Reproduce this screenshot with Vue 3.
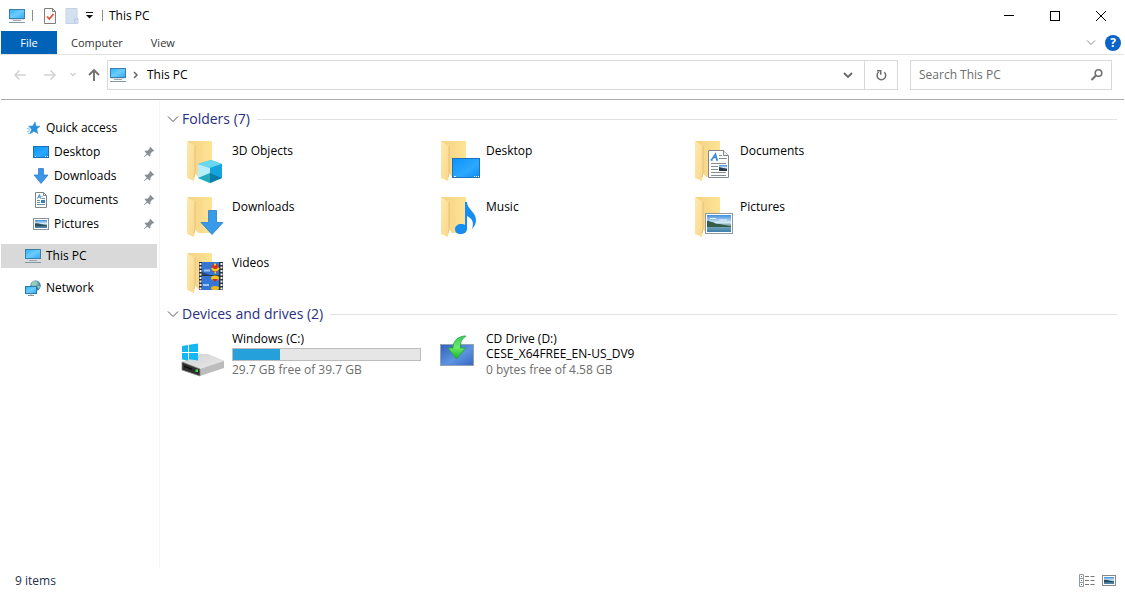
<template>
  <svg class="sprite" width="0" height="0" aria-hidden="true">
    <defs>
      <linearGradient id="g-screen" x1="0" y1="0" x2="1" y2="1">
        <stop offset="0" stop-color="#2fb0fa" />
        <stop offset="0.5" stop-color="#6cccff" />
        <stop offset="1" stop-color="#2fa8f5" />
      </linearGradient>
      <linearGradient id="g-desktop" x1="0" y1="0" x2="1" y2="1">
        <stop offset="0" stop-color="#0a94fb" />
        <stop offset="0.6" stop-color="#2ca8ff" />
        <stop offset="1" stop-color="#0d8df5" />
      </linearGradient>
      <linearGradient id="g-folder" x1="0" y1="0" x2="1" y2="0">
        <stop offset="0" stop-color="#f3d084" />
        <stop offset="1" stop-color="#ffe494" />
      </linearGradient>
      <linearGradient id="g-flap" x1="0" y1="0" x2="1" y2="1">
        <stop offset="0" stop-color="#ffe9ad" />
        <stop offset="1" stop-color="#f8d88c" />
      </linearGradient>
      <linearGradient id="g-photo" x1="0" y1="0" x2="0" y2="1">
        <stop offset="0" stop-color="#3f8ddd" />
        <stop offset="0.45" stop-color="#d6ebf7" />
        <stop offset="0.55" stop-color="#8fb5b8" />
        <stop offset="1" stop-color="#3c7fae" />
      </linearGradient>
      <linearGradient id="g-cd" x1="0" y1="0" x2="1" y2="1">
        <stop offset="0" stop-color="#315fb8" />
        <stop offset="0.55" stop-color="#5d93e0" />
        <stop offset="1" stop-color="#3767c0" />
      </linearGradient>
      <linearGradient id="g-green" x1="0" y1="0" x2="0" y2="1">
        <stop offset="0" stop-color="#3fca62" />
        <stop offset="0.5" stop-color="#6bea66" />
        <stop offset="1" stop-color="#12b325" />
      </linearGradient>
      <linearGradient id="g-drive" x1="0" y1="0" x2="1" y2="1">
        <stop offset="0" stop-color="#d2d2d2" />
        <stop offset="1" stop-color="#e9e9e9" />
      </linearGradient>
      <radialGradient id="g-globe" cx="0.4" cy="0.3" r="0.8">
        <stop offset="0" stop-color="#b8dfe4" />
        <stop offset="0.5" stop-color="#5a9fae" />
        <stop offset="1" stop-color="#23638c" />
      </radialGradient>
    </defs>

    <symbol id="i-pc" viewBox="0 0 16 16">
      <rect x="0.5" y="1.5" width="15" height="9" fill="url(#g-screen)" stroke="#3d7fa8" />
      <path d="M1 11.5h14" stroke="#d5dde2" />
      <path d="M4 12.5h8" stroke="#9aa8b0" />
      <path d="M0 14.5h16" stroke="#8299a8" />
    </symbol>
    <symbol id="i-props" viewBox="0 0 16 16">
      <path d="M2.5 0.5h8l3 3v12h-11z" fill="#fafafa" stroke="#7d7d7d" />
      <path d="M10.5 0.5v3h3" fill="none" stroke="#7d7d7d" />
      <path d="M5 8.5l2.3 2.5 4.2-5" fill="none" stroke="#e0502e" stroke-width="1.7" />
    </symbol>
    <symbol id="i-newfolder" viewBox="0 0 16 16">
      <path d="M2 0.5h11v10h1v5h-12z" fill="#d3e0f0" stroke="#c3d3e6" />
      <path d="M10.5 15v-4h3.5" fill="none" stroke="#b4c8df" />
    </symbol>
    <symbol id="i-star" viewBox="0 0 16 16">
      <path d="M10 2l1 4.2 4 .1-3.3 2.7 1.1 4.5-3.7-2.3-4 2.5 1.5-4.5-3-3 4.2-.1z" fill="#2a8edb" stroke="#2a8edb" stroke-width="0.6" />
      <path d="M2 8.5l3 .7M2 11.5l3-.7M3 13.8l2-.8" stroke="#7cc0f0" />
    </symbol>
    <symbol id="i-desktop" viewBox="0 0 16 16">
      <rect x="0.5" y="2.5" width="15" height="11" fill="url(#g-desktop)" stroke="#1b6fb9" />
      <path d="M2 12.5h1M12 12.5h1M14 12.5h1" stroke="#fff" />
    </symbol>
    <symbol id="i-download" viewBox="0 0 16 16">
      <path d="M5.5 0.5h5v6.5h4.5l-7 8.5-7-8.5h4.5z" fill="#3a96e8" stroke="#2777c2" stroke-width="0.7" />
    </symbol>
    <symbol id="i-document" viewBox="0 0 16 16">
      <path d="M2.5 0.5h8l3 3v12h-11z" fill="#fff" stroke="#7e868c" />
      <path d="M10.5 0.5v3h3" fill="none" stroke="#7e868c" />
      <path d="M4.5 6.5l2-4 1 4M5 5h2.5" fill="none" stroke="#3b8ad0" />
      <path d="M8.5 4.5h1M8.5 6.5h3.5M4 8.5h3M4 10.5h3M4 12.5h8" stroke="#6c8eb0" />
      <rect x="8" y="8" width="4" height="3" fill="#3b7cba" />
    </symbol>
    <symbol id="i-picture" viewBox="0 0 16 16">
      <rect x="0.5" y="2.5" width="15" height="11" fill="#fff" stroke="#8c9298" />
      <rect x="2" y="4" width="12" height="8" fill="url(#g-photo)" />
      <path d="M2 7.5c3-1 6 1 12 2v1h-12z" fill="#29505f" />
    </symbol>
    <symbol id="i-network" viewBox="0 0 16 16">
      <circle cx="10.5" cy="5.5" r="5.2" fill="url(#g-globe)" />
      <path d="M7 3c2-2 4-1 5 0l-2 2-3 1zM12 6l3 0-1 3z" fill="#9bcdaf" />
      <rect x="0.5" y="6.5" width="11" height="7" fill="url(#g-screen)" stroke="#2779ad" />
      <path d="M3 15.5h6M6 13v2" stroke="#7695a8" />
    </symbol>
    <symbol id="i-pin" viewBox="0 0 12 12">
      <path d="M7.200 0.8l4 4-1 .8-.8-.1-2 2.2.1 1.9-1 .9-2-2.100-3.300 2.900-.4-.4 2.900-3.300-2.100-2 .9-1 1.900.1 2.200-2-.1-.8z" fill="#8a8f94" />
    </symbol>

    <symbol id="i-folder" viewBox="0 0 48 48">
      <path d="M7 5h25v36h-18z" fill="url(#g-folder)" />
      <path d="M7 5l8 5v27l-1 8-7-3z" fill="url(#g-flap)" />
      <path d="M15 10v27l-1 4" fill="none" stroke="#e3bd6c" stroke-width="0.8" />
      <path d="M15 37.5l3 3-1 2.5-2 .5z" fill="#fff" />
    </symbol>
    <symbol id="i-objects-large" viewBox="0 0 48 48">
      <use href="#i-folder" />
      <path d="M31 24l11 4v14l-12 5-12-5v-14z" fill="#22b2d8" />
      <path d="M18 28l13-4 11 4-12 4z" fill="#6bd7ef" />
      <path d="M18 28l12 4v15l-12-5z" fill="#b5eef7" />
      <path d="M18 42l12-5v10z" fill="#25a9bd" />
      <path d="M30 32l12-4v14l-12-5z" fill="#14a3df" />
      <path d="M30 37l12 5-12 5z" fill="#087da8" />
    </symbol>
    <symbol id="i-desktop-large" viewBox="0 0 48 48">
      <use href="#i-folder" />
      <rect x="18.5" y="22.5" width="27" height="19" fill="url(#g-desktop)" stroke="#2071b8" />
      <path d="M20 40.5h2M40 40.5h1M42 40.5h1M44 40.5h1" stroke="#fff" />
    </symbol>
    <symbol id="i-documents-large" viewBox="0 0 48 48">
      <use href="#i-folder" />
      <path d="M20.5 14.5h15l5 5v22h-20z" fill="#fff" stroke="#7e8790" />
      <path d="M35.5 14.5v5h5" fill="#eee" stroke="#7e8790" />
      <path d="M22.5 24h2M23.5 24l4-6 1.500 6M25 21.500h4M28 24h2" fill="none" stroke="#348ad6" stroke-width="1.500" />
      <path d="M31 19.5h3M31 22.5h8M23 27.5h15M23 30.5h7M23 33.5h7M23 36.5h15M23 39.5h15" stroke="#858d96" />
      <rect x="31" y="29" width="8" height="6" fill="url(#g-photo)" />
      <path d="M31 31l8 2v2h-8z" fill="#253d4a" />
    </symbol>
    <symbol id="i-downloads-large" viewBox="0 0 48 48">
      <use href="#i-folder" />
      <path d="M28.5 18.5h8v12h6.5l-11 12-11-12h7.5z" fill="#389be9" stroke="#2a7fca" stroke-width="0.8" />
    </symbol>
    <symbol id="i-music-large" viewBox="0 0 48 48">
      <use href="#i-folder" />
      <path d="M31 10h2c0 7 9 10 9 18 0 4-2 7-4 9 2-6 1-10-5-13v13c0 3-3 5-6.5 5s-5.500-2-5.500-5 3-5 6-5c2 0 3 .4 4 1z" fill="#168df0" />
    </symbol>
    <symbol id="i-pictures-large" viewBox="0 0 48 48">
      <use href="#i-folder" />
      <rect x="17.5" y="21.5" width="27" height="20" fill="#fff" stroke="#92999e" />
      <rect x="19" y="23" width="24" height="17" fill="url(#g-photo)" />
      <path d="M19 29c2-1 3 1 5 1s3 2 6 2 6 1 13 2v1h-24z" fill="#355e4a" />
      <path d="M22 26.5h6M31 28h8" stroke="#e7f3fb" />
    </symbol>
    <symbol id="i-videos-large" viewBox="0 0 48 48">
      <use href="#i-folder" />
      <rect x="19" y="14" width="24" height="28" fill="#2d3338" />
      <rect x="22" y="14" width="17" height="13" fill="#3575d5" />
      <rect x="22" y="28" width="17" height="14" fill="#3575d5" />
      <path d="M20.5 15v27M41.5 15v27" stroke="#f2f2f2" stroke-width="2" stroke-dasharray="2 1.5" />
      <path d="M24 22.5h6M23 37h6" stroke="#9fc5f2" stroke-width="2" />
      <ellipse cx="35" cy="20" rx="3.5" ry="4" fill="#d63224" />
      <path d="M32 20c1 3 5 3 7 0" fill="none" stroke="#f6d21d" stroke-width="2" />
      <path d="M34 16.5h2M34.5 24.5h1.5" stroke="#f6d21d" stroke-width="2" />
      <ellipse cx="35" cy="30" rx="4" ry="2.5" fill="#f1c51b" />
      <path d="M32 31l3 3 3-3" fill="#c62a20" />
      <ellipse cx="35" cy="40" rx="4" ry="2" fill="#eaba17" />
      <path d="M22 24l8 3h-8z" fill="#24467d" />
    </symbol>

    <symbol id="i-drive-large" viewBox="0 0 48 48">
      <path d="M2 31l19-8h6l17 7v7l-24 8-18-6z" fill="#bcbcbc" />
      <path d="M2 31l19-8h6l17 7-24 8z" fill="url(#g-drive)" />
      <path d="M2 31l18 7v7l-18-6z" fill="#2e2e2e" stroke="#8a8a8a" stroke-width="0.8" />
      <path d="M4 34.5l8 3v1.5l-8-3z" fill="#0c0c0c" />
      <rect x="15.5" y="38.5" width="2.5" height="2.5" fill="#2ee33f" />
      <path d="M2 15l6-1v7h-6zM9 13.8l9-1.3v8.5h-9zM2 22h6v7.5l-6-1zM9 22h9v7.5l-9-1.2z" fill="#13b7f4" />
    </symbol>
    <symbol id="i-cd-large" viewBox="0 0 48 48">
      <rect x="6.5" y="13.5" width="33" height="21" fill="url(#g-cd)" stroke="#93a3b5" />
      <path d="M32 5c-7 0-13 4-13 12h-5l8.500 11 9-11h-5c-.5-5 1-9 5.500-12z" fill="url(#g-green)" stroke="#21a33b" stroke-width="0.8" />
    </symbol>
  </svg>

  <div class="explorer">
    <header class="titlebar">
      <svg class="icon"><use href="#i-pc" /></svg>
      <span class="divider"></span>
      <button class="quick" aria-label="Properties"><svg class="icon"><use href="#i-props" /></svg></button>
      <button class="quick" aria-label="New folder"><svg class="icon"><use href="#i-newfolder" /></svg></button>
      <button class="customize" aria-label="Customize Quick Access Toolbar">
        <svg width="9" height="7" viewBox="0 0 9 7"><path d="M1 0.5h7" stroke="#111" /><path d="M1 3h7l-3.5 3.5z" fill="#111" /></svg>
      </button>
      <span class="divider"></span>
      <h1 class="title">This PC</h1>
      <div class="window-controls">
        <button aria-label="Minimize">
          <svg width="10" height="10" viewBox="0 0 10 10"><path d="M0 4.5h10" stroke="#000" /></svg>
        </button>
        <button aria-label="Maximize">
          <svg width="10" height="10" viewBox="0 0 10 10"><rect x="0.5" y="0.5" width="9" height="9" fill="none" stroke="#000" /></svg>
        </button>
        <button aria-label="Close">
          <svg width="10" height="10" viewBox="0 0 10 10"><path d="M0 0l10 10M10 0L0 10" stroke="#000" /></svg>
        </button>
      </div>
    </header>

    <nav class="ribbon">
      <button v-for="tab in tabs" :key="tab" class="tab" :class="{ 'tab--file': tab === 'File' }">{{ tab }}</button>
      <button class="expand" aria-label="Expand the Ribbon">
        <svg width="10" height="6" viewBox="0 0 10 6"><path d="M1 0.5l4 4 4-4" fill="none" stroke="#8a8a8a" /></svg>
      </button>
      <button class="help" aria-label="Help">?</button>
    </nav>

    <div class="toolbar">
      <button class="nav nav--wide" aria-label="Back" disabled>
        <svg width="14" height="12" viewBox="0 0 14 12"><path d="M13 6H2M6.5 1.5L2 6l4.5 4.5" fill="none" stroke="#d2d2d2" stroke-width="1.5" /></svg>
      </button>
      <button class="nav nav--wide" aria-label="Forward" disabled>
        <svg width="14" height="12" viewBox="0 0 14 12"><path d="M1 6h11M7.5 1.5L12 6l-4.5 4.5" fill="none" stroke="#d2d2d2" stroke-width="1.5" /></svg>
      </button>
      <button class="nav nav--slim" aria-label="Recent locations">
        <svg width="8" height="6" viewBox="0 0 8 6"><path d="M1.5 1L4 3.5 6.5 1" fill="none" stroke="#cfcfcf" stroke-width="1.3" /></svg>
      </button>
      <button class="nav" aria-label="Up">
        <svg width="14" height="14" viewBox="0 0 14 14"><path d="M7 13V2M2 7l5-5 5 5" fill="none" stroke="#707070" stroke-width="1.9" /></svg>
      </button>
      <div class="address">
        <svg class="icon"><use href="#i-pc" /></svg>
        <svg class="crumb-arrow" width="6" height="8" viewBox="0 0 6 8"><path d="M1 1l3 3-3 3" fill="none" stroke="#666" stroke-width="1.5" /></svg>
        <button class="crumb">This PC</button>
        <button class="history" aria-label="Previous locations">
          <svg width="10" height="7" viewBox="0 0 10 7"><path d="M1 1l4 4 4-4" fill="none" stroke="#666" stroke-width="1.8" /></svg>
        </button>
        <button class="refresh" aria-label="Refresh">
          <svg width="12" height="12" viewBox="0 0 12 12">
            <path d="M9.400 3.3A4.300 4.300 0 1 1 3.700 3" fill="none" stroke="#6c6c6c" stroke-width="1.5" />
            <path d="M2 1.7h3.700v4" fill="none" stroke="#6c6c6c" stroke-width="1.5" />
          </svg>
        </button>
      </div>
      <form class="search" role="search" @submit.prevent>
        <input v-model="query" type="text" placeholder="Search This PC" aria-label="Search This PC" />
        <svg width="14" height="14" viewBox="0 0 14 14">
          <circle cx="8.5" cy="5" r="3.3" fill="none" stroke="#707070" stroke-width="1.6" />
          <path d="M6.200 7.300L1.500 12" stroke="#707070" stroke-width="2" />
        </svg>
      </form>
    </div>

    <div class="body">
      <nav class="sidebar">
        <ul v-for="(group, index) in places" :key="index">
          <li v-for="place in group" :key="place.label">
            <a
              href="#"
              class="place"
              :class="{ 'place--child': place.pinned, 'place--active': place.active }"
            >
              <svg class="icon"><use :href="`#i-${place.icon}`" /></svg>
              <span>{{ place.label }}</span>
              <svg v-if="place.pinned" class="pin"><use href="#i-pin" /></svg>
            </a>
          </li>
        </ul>
      </nav>

      <main class="content">
        <section>
          <h2 class="group">
            <svg width="12" height="8" viewBox="0 0 12 8"><path d="M1 1.5l5 5 5-5" fill="none" stroke="#555" /></svg>
            <span>Folders ({{ folders.length }})</span>
          </h2>
          <div class="tiles">
            <a v-for="folder in folders" :key="folder.label" href="#" class="tile">
              <svg class="tile-icon"><use :href="`#i-${folder.icon}-large`" /></svg>
              <span class="tile-text tile-text--folder">{{ folder.label }}</span>
            </a>
          </div>
        </section>

        <section>
          <h2 class="group">
            <svg width="12" height="8" viewBox="0 0 12 8"><path d="M1 1.5l5 5 5-5" fill="none" stroke="#555" /></svg>
            <span>Devices and drives ({{ drives.length }})</span>
          </h2>
          <div class="tiles">
            <a v-for="drive in drives" :key="drive.label" href="#" class="tile">
              <svg class="tile-icon"><use :href="`#i-${drive.icon}-large`" /></svg>
              <span class="tile-text">
                <span>{{ drive.label }}</span>
                <span v-if="drive.volume">{{ drive.volume }}</span>
                <span v-else class="usage"><span class="usage-fill" :style="{ width: usedPercent(drive) }"></span></span>
                <span class="free">{{ drive.free }} free of {{ drive.total }} GB</span>
              </span>
            </a>
          </div>
        </section>
      </main>
    </div>

    <footer class="statusbar">
      <span>{{ folders.length + drives.length }} items</span>
      <div class="views">
        <button aria-label="Details view">
          <svg width="16" height="13" viewBox="0 0 16 13">
            <path d="M0.5 0.5h4v4h-4zM0.5 4.5h4v4h-4zM0.5 8.5h4v4h-4z" fill="#fff" stroke="#999" />
            <path d="M2 2.5h1M2 6.5h1M2 10.5h1" stroke="#2d74a5" />
            <path d="M6 2.5h4M11.5 2.5h4M6 6.5h4M11.5 6.5h4M6 10.5h4M11.5 10.5h4" stroke="#777" />
          </svg>
        </button>
        <button aria-label="Large thumbnails view">
          <svg width="14" height="12" viewBox="0 0 14 12">
            <rect x="0.5" y="0.5" width="13" height="10" fill="#fff" stroke="#888" />
            <rect x="2" y="2" width="10" height="7" fill="url(#g-photo)" />
            <path d="M2 5c3-1 5 1 10 1.500v1h-10z" fill="#29505f" />
          </svg>
        </button>
      </div>
    </footer>
  </div>
</template>

<script setup>
import { ref } from 'vue';

const query = ref('');

const tabs = ['File', 'Computer', 'View'];

const places = [
  [
    { label: 'Quick access', icon: 'star' },
    { label: 'Desktop', icon: 'desktop', pinned: true },
    { label: 'Downloads', icon: 'download', pinned: true },
    { label: 'Documents', icon: 'document', pinned: true },
    { label: 'Pictures', icon: 'picture', pinned: true }
  ],
  [{ label: 'This PC', icon: 'pc', active: true }],
  [{ label: 'Network', icon: 'network' }]
];

const folders = [
  { label: '3D Objects', icon: 'objects' },
  { label: 'Desktop', icon: 'desktop' },
  { label: 'Documents', icon: 'documents' },
  { label: 'Downloads', icon: 'downloads' },
  { label: 'Music', icon: 'music' },
  { label: 'Pictures', icon: 'pictures' },
  { label: 'Videos', icon: 'videos' }
];

const drives = [
  { label: 'Windows (C:)', icon: 'drive', free: '29.7 GB', total: 39.7 },
  { label: 'CD Drive (D:)', icon: 'cd', volume: 'CESE_X64FREE_EN-US_DV9', free: '0 bytes', total: 4.58 }
];

const usedPercent = (drive) => `${(1 - parseFloat(drive.free) / drive.total) * 100}%`;
</script>

<style>
body {
  margin: 0;
  background: #fff;
}
</style>

<style scoped>
.sprite {
  position: absolute;
}

.explorer {
  box-sizing: border-box;
  display: flex;
  flex-direction: column;
  min-height: 100vh;
  padding: 0 1px;
  background: #fff;
  color: #000;
  font-family: "Segoe UI", "Open Sans", sans-serif;
  font-size: 12px;
  line-height: 16px;
}

button {
  display: flex;
  align-items: center;
  justify-content: center;
  padding: 0;
  border: 0;
  background: none;
  color: inherit;
  font: inherit;
}

a {
  color: inherit;
  text-decoration: none;
}

svg {
  display: block;
  flex: none;
}

.icon {
  width: 16px;
  height: 16px;
}

/* title bar */
.titlebar {
  display: flex;
  align-items: center;
  height: 31px;
  padding-left: 8px;
}

.divider {
  width: 1px;
  height: 11px;
  margin: 0 6px 0 7px;
  background: #8c8c8c;
}

.quick {
  width: 22px;
  height: 24px;
}

.customize {
  width: 12px;
  height: 24px;
}

.title {
  margin: 0;
  font-size: 12px;
  font-weight: 400;
}

.window-controls {
  display: flex;
  align-self: stretch;
  margin-left: auto;
}

.window-controls button {
  width: 46px;
}

/* ribbon tabs */
.ribbon {
  display: flex;
  align-items: center;
  height: 23px;
  border-bottom: 1px solid #e2e3e4;
}

.tab {
  height: 23px;
  padding: 0 14px;
  color: #333;
  font-size: 11px;
}

.tab--file {
  width: 56px;
  background: #0063b8;
  color: #fff;
}

.expand {
  width: 20px;
  height: 20px;
  margin-left: auto;
}

.help {
  width: 16px;
  height: 16px;
  margin: 0 3px 0 4px;
  border-radius: 50%;
  background: #0a63c9;
  color: #fff;
  font-size: 12px;
  font-weight: 700;
}

/* address row */
.toolbar {
  display: flex;
  align-items: center;
  box-sizing: border-box;
  height: 45px;
  padding: 0 12px 4px 4px;
  border-bottom: 1px solid #adadad;
}

.nav {
  width: 26px;
  height: 28px;
}

.nav--wide {
  width: 30px;
}

.nav--slim {
  width: 16px;
}

.address {
  display: flex;
  flex: 1;
  align-items: center;
  box-sizing: border-box;
  height: 30px;
  padding-left: 2px;
  border: 1px solid #d9d9d9;
}

.crumb-arrow {
  margin: 0 8px 0 7px;
}

.history {
  width: 32px;
  height: 28px;
  margin-left: auto;
}

.refresh {
  width: 33px;
  height: 28px;
  border-left: 1px solid #d9d9d9;
}

.search {
  display: flex;
  align-items: center;
  box-sizing: border-box;
  width: 202px;
  height: 30px;
  margin-left: 12px;
  padding: 0 7px 0 8px;
  border: 1px solid #d9d9d9;
}

.search input {
  flex: 1;
  min-width: 0;
  padding: 0;
  border: 0;
  outline: 0;
  background: none;
  font: inherit;
}

.search input::placeholder {
  color: #6d6d6d;
  opacity: 1;
}

/* body */
.body {
  display: flex;
  flex: 1;
}

.sidebar {
  display: flex;
  flex-direction: column;
  gap: 8px;
  width: 158px;
  padding-top: 16px;
  border-right: 1px solid #f5f5f5;
}

.sidebar ul {
  margin: 0;
  padding: 0;
  list-style: none;
}

.place {
  display: flex;
  align-items: center;
  gap: 5px;
  height: 24px;
  margin-right: 2px;
  padding: 0 2px 0 24px;
}

.place--child {
  padding-left: 32px;
}

.place--active {
  background: #d9d9d9;
}

.pin {
  width: 12px;
  height: 12px;
  margin-left: auto;
}

.content {
  flex: 1;
  padding: 9px 7px 0;
}

.group {
  display: flex;
  align-items: center;
  gap: 3px;
  margin: 0 0 7px;
  color: #2a2f80;
  font-size: 14px;
  font-weight: 400;
  line-height: 20px;
}

.group::after {
  flex: 1;
  height: 1px;
  margin-left: 4px;
  background: #e2e2e2;
  content: "";
}

.tiles {
  display: grid;
  grid-template-columns: repeat(auto-fill, 254px);
  padding-left: 13px;
}

.tile {
  display: flex;
  gap: 4px;
  height: 56px;
}

.tile-icon {
  width: 48px;
  height: 48px;
}

.tile-text {
  display: flex;
  flex: 1;
  flex-direction: column;
  line-height: 15px;
}

.tile-text--folder {
  padding-top: 7px;
}

.usage {
  box-sizing: border-box;
  width: 189px;
  height: 13px;
  margin-top: 2px;
  border: 1px solid #bcbcbc;
  background: #e6e6e6;
}

.usage-fill {
  display: block;
  height: 100%;
  background: #26a0da;
}

.free {
  margin-top: 1px;
  color: #6d6d6d;
}

/* status bar */
.statusbar {
  display: flex;
  align-items: center;
  justify-content: space-between;
  height: 25px;
  padding: 0 8px 0 14px;
  color: #1e3250;
}

.views {
  display: flex;
  align-items: center;
  gap: 7px;
}
</style>
